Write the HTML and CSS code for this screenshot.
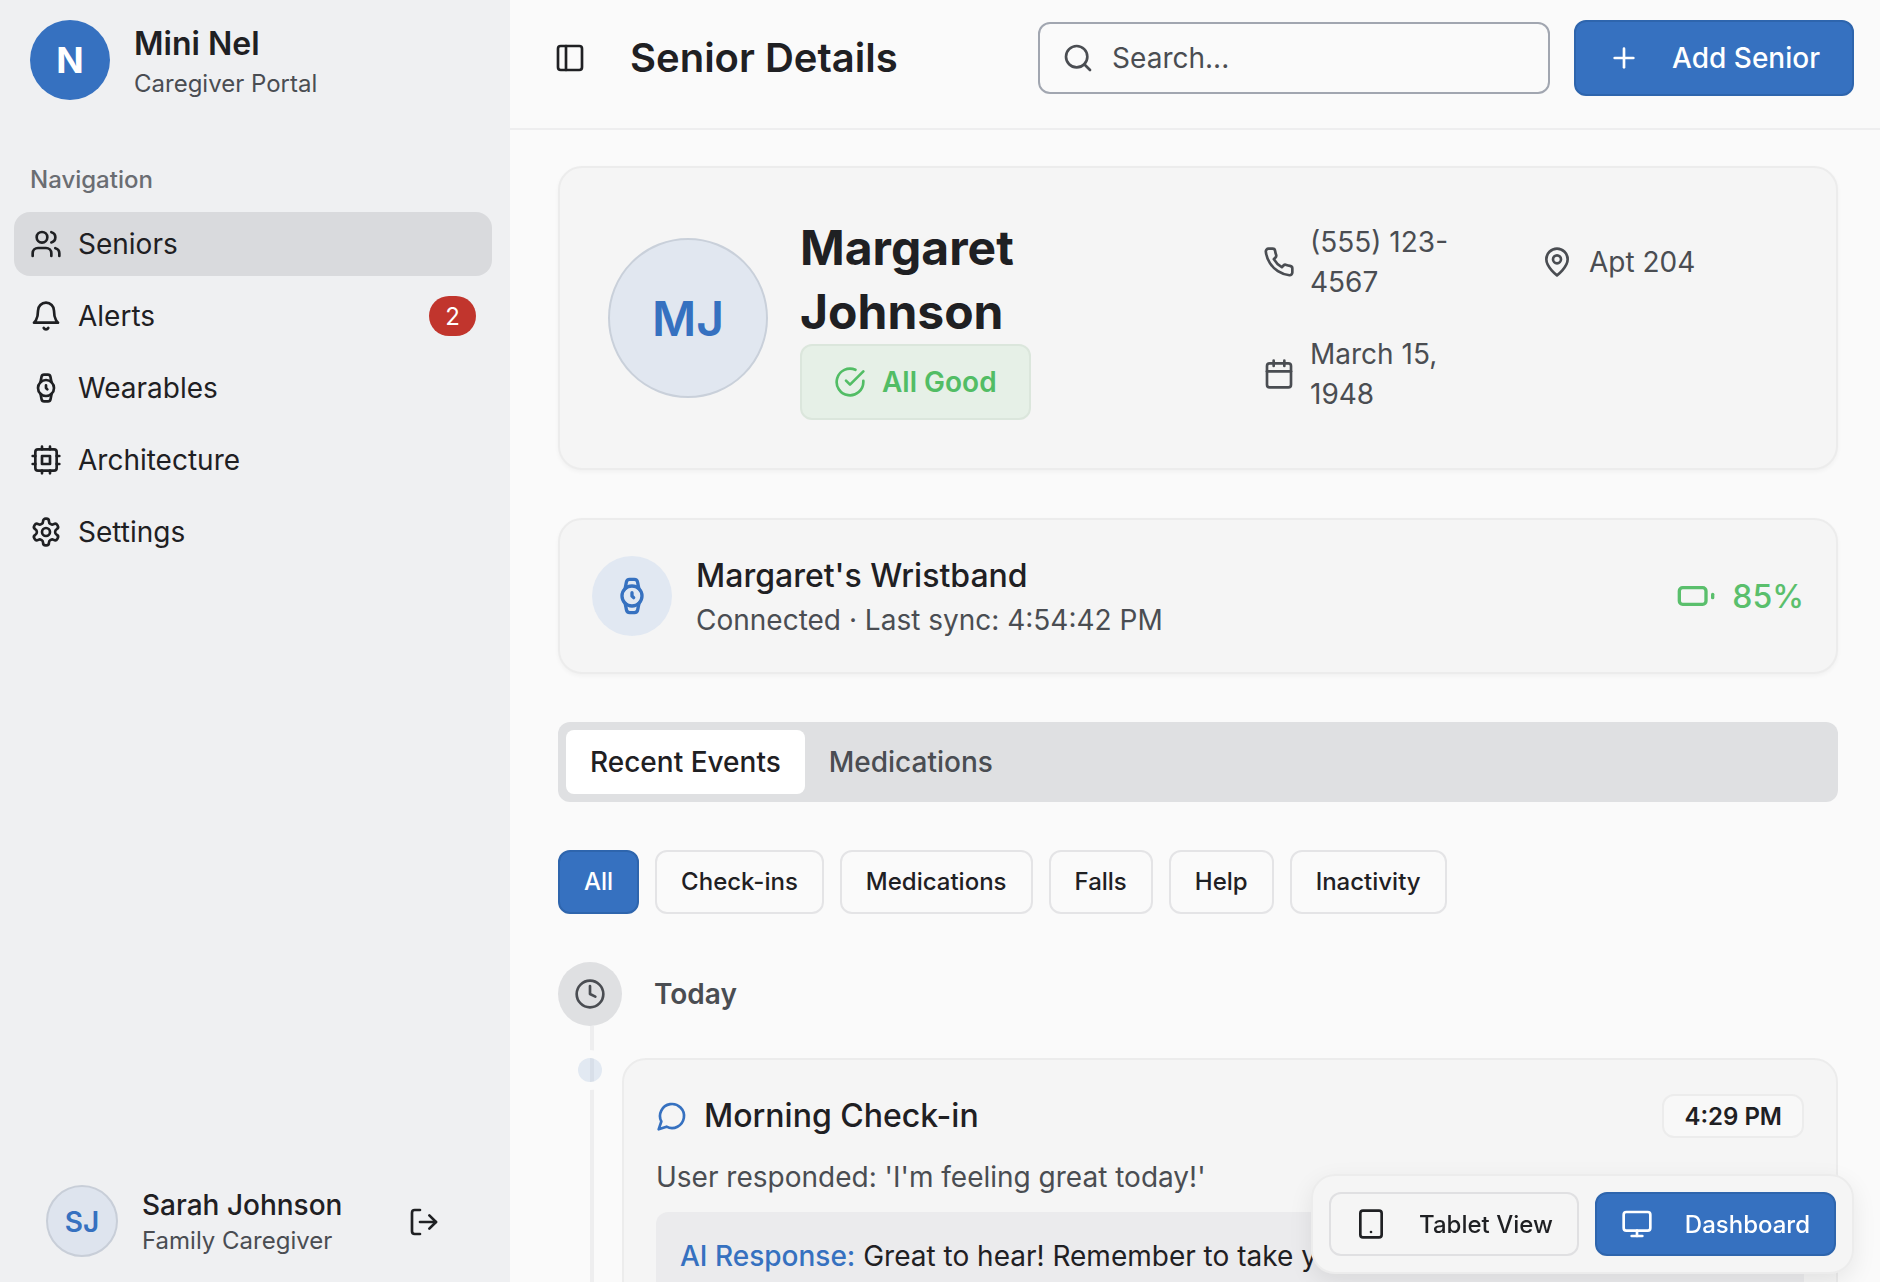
FILE: index.html
```html
<!DOCTYPE html>
<html lang="en">
<head>
<meta charset="utf-8">
<title>Senior Details</title>
<link rel="stylesheet" href="styles.css">
</head>
<body>
<div class="app">
  <aside class="sidebar">
    <div class="brand">
      <div class="brand-mark">N</div>
      <div class="brand-text">
        <div class="brand-name">Mini Nel</div>
        <div class="brand-sub">Caregiver Portal</div>
      </div>
    </div>
    <div class="nav-label">Navigation</div>
    <nav class="nav">
      <a class="nav-item is-active">
        <svg class="icon" viewBox="0 0 24 24"><path d="M16 21v-2a4 4 0 0 0-4-4H6a4 4 0 0 0-4 4v2"/><circle cx="9" cy="7" r="4"/><path d="M22 21v-2a4 4 0 0 0-3-3.87"/><path d="M16 3.13a4 4 0 0 1 0 7.75"/></svg>
        <span>Seniors</span>
      </a>
      <a class="nav-item">
        <svg class="icon" viewBox="0 0 24 24"><path d="M6 8a6 6 0 0 1 12 0c0 7 3 9 3 9H3s3-2 3-9"/><path d="M10.3 21a1.94 1.94 0 0 0 3.4 0"/></svg>
        <span>Alerts</span>
        <span class="nav-badge">2</span>
      </a>
      <a class="nav-item">
        <svg class="icon" viewBox="0 0 24 24"><circle cx="12" cy="12" r="6"/><polyline points="12 10 12 12 13 13"/><path d="m16.13 7.66-.81-4.05a2 2 0 0 0-2-1.61h-2.68a2 2 0 0 0-2 1.61l-.78 4.05"/><path d="m7.88 16.36.8 4a2 2 0 0 0 2 1.61h2.72a2 2 0 0 0 2-1.61l.81-4.05"/></svg>
        <span>Wearables</span>
      </a>
      <a class="nav-item">
        <svg class="icon" viewBox="0 0 24 24"><rect x="4" y="4" width="16" height="16" rx="2"/><rect x="9" y="9" width="6" height="6"/><path d="M15 2v2M15 20v2M2 15h2M2 9h2M20 15h2M20 9h2M9 2v2M9 20v2"/></svg>
        <span>Architecture</span>
      </a>
      <a class="nav-item">
        <svg class="icon" viewBox="0 0 24 24"><path d="M12.22 2h-.44a2 2 0 0 0-2 2v.18a2 2 0 0 1-1 1.73l-.43.25a2 2 0 0 1-2 0l-.15-.08a2 2 0 0 0-2.73.73l-.22.38a2 2 0 0 0 .73 2.73l.15.1a2 2 0 0 1 1 1.72v.51a2 2 0 0 1-1 1.74l-.15.09a2 2 0 0 0-.73 2.73l.22.38a2 2 0 0 0 2.73.73l.15-.08a2 2 0 0 1 2 0l.43.25a2 2 0 0 1 1 1.73V20a2 2 0 0 0 2 2h.44a2 2 0 0 0 2-2v-.18a2 2 0 0 1 1-1.73l.43-.25a2 2 0 0 1 2 0l.15.08a2 2 0 0 0 2.73-.73l.22-.39a2 2 0 0 0-.73-2.73l-.15-.08a2 2 0 0 1-1-1.74v-.5a2 2 0 0 1 1-1.74l.15-.09a2 2 0 0 0 .73-2.73l-.22-.38a2 2 0 0 0-2.73-.73l-.15.08a2 2 0 0 1-2 0l-.43-.25a2 2 0 0 1-1-1.73V4a2 2 0 0 0-2-2z"/><circle cx="12" cy="12" r="3"/></svg>
        <span>Settings</span>
      </a>
    </nav>
    <div class="account">
      <div class="account-avatar">SJ</div>
      <div class="account-text">
        <div class="account-name">Sarah Johnson</div>
        <div class="account-role">Family Caregiver</div>
      </div>
      <svg class="icon account-logout" viewBox="0 0 24 24"><path d="M9 21H5a2 2 0 0 1-2-2V5a2 2 0 0 1 2-2h4"/><polyline points="16 17 21 12 16 7"/><line x1="21" y1="12" x2="9" y2="12"/></svg>
    </div>
  </aside>

  <div class="main">
    <header class="topbar">
      <svg class="icon topbar-toggle" viewBox="0 0 24 24"><rect x="3" y="3" width="18" height="18" rx="2"/><path d="M9 3v18"/></svg>
      <h1 class="topbar-title">Senior Details</h1>
      <div class="search">
        <svg class="icon" viewBox="0 0 24 24"><circle cx="11" cy="11" r="8"/><path d="m21 21-4.3-4.3"/></svg>
        <span>Search...</span>
      </div>
      <div class="add-btn">
        <svg class="icon" viewBox="0 0 24 24"><path d="M5 12h14"/><path d="M12 5v14"/></svg>
        <span>Add Senior</span>
      </div>
    </header>

    <main class="content">
      <section class="card profile">
        <div class="profile-avatar">MJ</div>
        <div class="profile-id">
          <h2 class="profile-name">Margaret Johnson</h2>
          <div class="status">
            <svg class="icon" viewBox="0 0 24 24"><path d="M22 11.08V12a10 10 0 1 1-5.93-9.14"/><path d="m9 11 3 3L22 4"/></svg>
            <span>All Good</span>
          </div>
        </div>
        <div class="profile-facts">
          <div class="fact">
            <svg class="icon" viewBox="0 0 24 24"><path d="M22 16.92v3a2 2 0 0 1-2.18 2 19.79 19.79 0 0 1-8.63-3.07 19.5 19.5 0 0 1-6-6 19.79 19.79 0 0 1-3.07-8.67A2 2 0 0 1 4.11 2h3a2 2 0 0 1 2 1.72 12.84 12.84 0 0 0 .7 2.81 2 2 0 0 1-.45 2.11L8.09 9.91a16 16 0 0 0 6 6l1.27-1.27a2 2 0 0 1 2.11-.45 12.84 12.84 0 0 0 2.81.7A2 2 0 0 1 22 16.92z"/></svg>
            <span>(555) 123-4567</span>
          </div>
          <div class="fact">
            <svg class="icon" viewBox="0 0 24 24"><path d="M20 10c0 6-8 12-8 12s-8-6-8-12a8 8 0 0 1 16 0Z"/><circle cx="12" cy="10" r="3"/></svg>
            <span>Apt 204</span>
          </div>
          <div class="fact">
            <svg class="icon" viewBox="0 0 24 24"><path d="M8 2v4"/><path d="M16 2v4"/><rect x="3" y="4" width="18" height="18" rx="2"/><path d="M3 10h18"/></svg>
            <span>March 15, 1948</span>
          </div>
        </div>
      </section>

      <section class="card device">
        <div class="device-icon">
          <svg class="icon" viewBox="0 0 24 24"><circle cx="12" cy="12" r="6"/><polyline points="12 10 12 12 13 13"/><path d="m16.13 7.66-.81-4.05a2 2 0 0 0-2-1.61h-2.68a2 2 0 0 0-2 1.61l-.78 4.05"/><path d="m7.88 16.36.8 4a2 2 0 0 0 2 1.61h2.72a2 2 0 0 0 2-1.61l.81-4.05"/></svg>
        </div>
        <div class="device-text">
          <div class="device-name">Margaret's Wristband</div>
          <div class="device-sub">Connected · Last sync: 4:54:42 PM</div>
        </div>
        <div class="battery">
          <svg class="icon" viewBox="0 0 24 24"><rect x="2" y="7" width="16" height="10" rx="2"/><line x1="22" y1="11" x2="22" y2="13"/></svg>
          <span>85%</span>
        </div>
      </section>

      <div class="tabs">
        <div class="tab is-active">Recent Events</div>
        <div class="tab">Medications</div>
      </div>

      <div class="filters">
        <div class="filter is-active">All</div>
        <div class="filter">Check-ins</div>
        <div class="filter">Medications</div>
        <div class="filter">Falls</div>
        <div class="filter">Help</div>
        <div class="filter">Inactivity</div>
      </div>

      <div class="timeline">
        <div class="day">
          <div class="day-icon">
            <svg class="icon" viewBox="0 0 24 24"><circle cx="12" cy="12" r="10"/><polyline points="12 6 12 12 16 14"/></svg>
          </div>
          <div class="day-label">Today</div>
        </div>
        <div class="event">
          <div class="event-rail"><span class="event-dot"></span></div>
          <article class="event-card">
            <div class="event-head">
              <svg class="icon" viewBox="0 0 24 24"><path d="M7.9 20A9 9 0 1 0 4 16.1L2 22Z"/></svg>
              <h3 class="event-title">Morning Check-in</h3>
              <span class="event-time">4:29 PM</span>
            </div>
            <p class="event-desc">User responded: 'I'm feeling great today!'</p>
            <div class="event-ai"><span class="event-ai-label">AI Response:</span> Great to hear! Remember to take your morning medication.</div>
          </article>
        </div>
      </div>
    </main>
  </div>
</div>

<div class="view-switch">
  <div class="view-btn">
    <svg class="icon" viewBox="0 0 24 24"><rect x="4" y="2" width="16" height="20" rx="2" ry="2"/><line x1="12" y1="18" x2="12.01" y2="18"/></svg>
    <span>Tablet View</span>
  </div>
  <div class="view-btn is-active">
    <svg class="icon" viewBox="0 0 24 24"><rect x="2" y="3" width="20" height="14" rx="2"/><line x1="8" y1="21" x2="16" y2="21"/><line x1="12" y1="17" x2="12" y2="21"/></svg>
    <span>Dashboard</span>
  </div>
</div>
</body>
</html>
```
FILE: styles.css
```css
* { box-sizing: border-box; }
html, body { margin: 0; height: 100%; overflow: hidden; }
body { font-family: Inter, "Liberation Sans", sans-serif; color: #1f2023; background: #fafafa; }
h1, h2, h3, p { margin: 0; }

.icon { width: 32px; height: 32px; flex: none; fill: none; stroke: currentColor; stroke-width: 2; stroke-linecap: round; stroke-linejoin: round; }

.app { display: flex; height: 1282px; overflow: hidden; }

/* Sidebar */
.sidebar { width: 510px; flex: none; display: flex; flex-direction: column; background: #eff0f2; padding: 20px 18px 25px 14px; }
.brand { display: flex; align-items: flex-start; gap: 24px; padding-left: 16px; }
.brand-mark { width: 80px; height: 80px; flex: none; border-radius: 50%; background: #3671c0; color: #fff; display: flex; align-items: center; justify-content: center; font-size: 36px; font-weight: 700; }
.brand-text { padding-top: 4px; }
.brand-name { font-size: 32px; font-weight: 600; line-height: 40px; }
.brand-sub { font-size: 24px; line-height: 40px; color: #4a4d52; }
.nav-label { margin-top: 58px; padding-left: 16px; font-size: 24px; line-height: 36px; font-weight: 500; color: #6a6d72; }
.nav { margin-top: 14px; display: flex; flex-direction: column; gap: 8px; }
.nav-item { height: 64px; display: flex; align-items: center; gap: 16px; padding: 0 16px; border-radius: 16px; font-size: 28px; color: #1f2023; }
.nav-item.is-active { background: #d9dadd; }
.nav-badge { margin-left: auto; min-width: 47px; height: 40px; border-radius: 20px; background: #c1352d; color: #fff; font-size: 24px; display: flex; align-items: center; justify-content: center; }
.account { margin-top: auto; display: flex; align-items: center; padding-left: 32px; }
.account-avatar { width: 72px; height: 72px; padding-top: 2px; border-radius: 50%; background: #dee4ee; border: 2px solid #c8ced8; color: #3671c0; display: flex; align-items: center; justify-content: center; font-size: 28px; font-weight: 600; }
.account-text { margin-left: 24px; }
.account-name { font-size: 28px; font-weight: 500; line-height: 40px; }
.account-role { font-size: 24px; line-height: 32px; color: #4a4d52; }
.account-logout { margin: 2px 0 0 66px; }

/* Main */
.main { flex: 1; min-width: 0; display: flex; flex-direction: column; }
.topbar { height: 130px; flex: none; display: flex; align-items: center; padding: 0 26px 12px 44px; border-bottom: 2px solid #eeeeef; }
.topbar-toggle { color: #1f2023; }
.topbar-title { margin-left: 44px; font-size: 40px; font-weight: 600; line-height: 48px; }
.search { margin-left: auto; width: 512px; height: 72px; display: flex; align-items: center; gap: 18px; padding: 0 22px; border: 2px solid #a1a6b0; border-radius: 12px; font-size: 28px; color: #4a4d52; }
.add-btn { margin-left: 24px; height: 76px; display: flex; align-items: center; gap: 32px; padding: 0 32px; background: #3671c0; border: 2px solid #2e65ad; border-radius: 12px; color: #fff; font-size: 28px; font-weight: 500; }

.content { flex: 1; min-height: 0; overflow: hidden; padding: 36px 42px 0 48px; }

.card { background: #f5f5f5; border: 2px solid #ececec; border-radius: 24px; box-shadow: 0 2px 4px rgba(0, 0, 0, .04); }

.profile { display: flex; align-items: center; padding: 48px; }
.profile-avatar { width: 160px; height: 160px; flex: none; border-radius: 50%; background: #e1e7f0; border: 2px solid #c9d0da; color: #3671c0; display: flex; align-items: center; justify-content: center; font-size: 48px; font-weight: 600; }
.profile-id { width: 231px; margin-left: 32px; flex: none; }
.profile-name { font-size: 48px; font-weight: 700; line-height: 64px; }
.status { height: 76px; display: flex; align-items: center; gap: 16px; padding: 0 32px; background: #e6f0e7; border: 2px solid #dbe6dc; border-radius: 12px; color: #52bd65; font-size: 28px; font-weight: 600; white-space: nowrap; }
.profile-facts { margin-left: 232px; display: grid; grid-template-columns: 230px 230px; gap: 32px 48px; }
.fact { display: flex; align-items: center; gap: 15px; font-size: 28px; line-height: 40px; color: #4a4d52; }
.fact:nth-child(2) { gap: 16px; }

.device { margin-top: 48px; display: flex; align-items: center; padding: 30px 32px; }
.device-icon { width: 80px; height: 80px; flex: none; border-radius: 50%; background: #e1e8f2; color: #3671c0; display: flex; align-items: center; justify-content: center; }
.device-icon .icon { width: 40px; height: 40px; }
.device-text { margin-left: 24px; padding-top: 4px; }
.device-name { font-size: 32px; font-weight: 500; line-height: 44px; }
.device-sub { font-size: 28px; line-height: 44px; color: #4a4d52; }
.battery { margin-left: auto; display: flex; align-items: center; gap: 16px; color: #5abf6c; font-size: 32px; font-weight: 500; }
.battery .icon { width: 40px; height: 40px; }

.tabs { margin-top: 48px; display: flex; align-items: center; height: 80px; padding: 8px; background: #dfe0e2; border-radius: 12px; }
.tab { height: 64px; display: flex; align-items: center; padding: 0 24px; border-radius: 8px; font-size: 28px; font-weight: 500; color: #4a4d52; }
.tab.is-active { background: #fff; color: #1f2023; }

.filters { margin-top: 48px; display: flex; gap: 16px; }
.filter { height: 64px; display: flex; align-items: center; padding: 0 24px 1px; background: #fafafa; border: 2px solid #e4e4e6; border-radius: 12px; font-size: 24px; font-weight: 500; color: #1f2023; }
.filter.is-active { background: #3671c0; border-color: #2e65ad; color: #fff; }

.timeline { margin-top: 48px; }
.day { display: flex; align-items: center; gap: 32px; }
.day-icon { width: 64px; height: 64px; border-radius: 50%; background: #dfe0e2; color: #4a4d52; display: flex; align-items: center; justify-content: center; }
.day-label { font-size: 28px; font-weight: 600; color: #4a4d52; }

.event { display: flex; }
.event-rail { width: 64px; flex: none; position: relative; height: 300px; }
.event-rail::before { content: ""; position: absolute; left: 32px; top: 0; bottom: 0; width: 4px; background: #eeeeef; }
.event-dot { position: absolute; left: 20px; top: 32px; width: 24px; height: 24px; border-radius: 50%; background: rgba(54, 113, 192, .12); box-shadow: 0 0 0 8px #fafafa; }
.event-card { flex: 1; margin-top: 32px; height: 400px; padding: 34px 32px; background: #f5f5f5; border: 2px solid #ececec; border-radius: 24px; }
.event-head { display: flex; align-items: center; gap: 16px; }
.event-head .icon { color: #3671c0; }
.event-title { font-size: 32px; font-weight: 500; line-height: 44px; }
.event-time { margin-left: auto; height: 44px; display: flex; align-items: center; padding: 0 20px; background: #f8f8f8; border: 2px solid #ececec; border-radius: 12px; font-size: 24px; font-weight: 600; }
.event-desc { margin-top: 17px; font-size: 28px; line-height: 44px; color: #4a4d52; }
.event-ai { margin-top: 13px; padding: 24px; background: #ebebed; border-radius: 12px; font-size: 28px; line-height: 40px; }
.event-ai-label { color: #3671c0; font-weight: 500; }

/* Floating view switch */
.view-switch { position: fixed; right: 26px; top: 1174px; display: flex; gap: 16px; padding: 16px; background: #f5f5f5; border: 2px solid #ececec; border-radius: 24px; box-shadow: 0 8px 24px rgba(0, 0, 0, .08); }
.view-btn { height: 64px; display: flex; align-items: center; gap: 32px; padding: 0 24px; border: 2px solid #e0e0e2; border-radius: 12px; font-size: 24px; font-weight: 500; background: #f5f5f5; }
.view-btn.is-active { background: #3671c0; border-color: #2e65ad; color: #fff; }
```
